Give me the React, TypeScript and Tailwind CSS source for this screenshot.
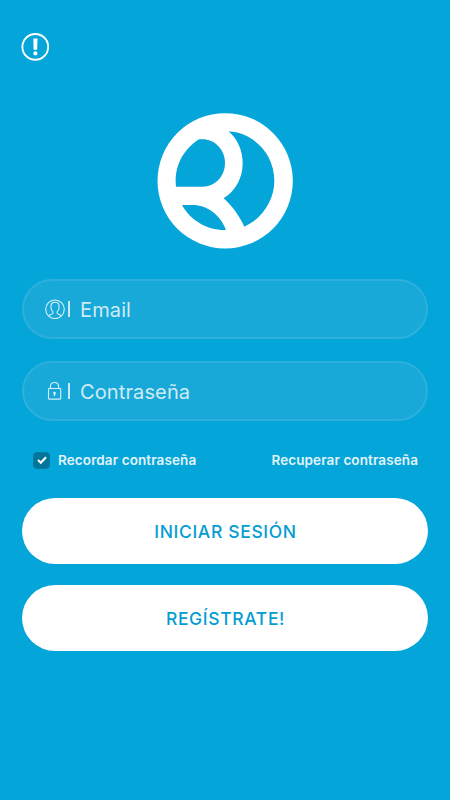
import { useState } from "react";

interface FieldProps {
  label: string;
  icon: React.ReactNode;
}

const Logo: React.FC = () => (
  <svg className="h-[136px] w-[136px]" viewBox="36 39 408 408">
    <circle cx="240.5" cy="242.5" r="203" fill="#fff" />
    <g fill="#04a5d9">
      <path d="M162 118H172C210 118 240 150 240 189C240 228 211 260 173 260H93C86 203 112 150 162 118Z" />
      <path d="M251 94C329 99 388 164 388 242C388 301 351 356 298 380C283 348 262 318 236 295C272 273 293 234 293 190C293 151 278 118 251 94Z" />
      <path d="M111 315H142C188 315 225 345 243 390C187 392 136 361 111 315Z" />
    </g>
  </svg>
);

const AlertIcon: React.FC = () => (
  <svg className="h-7 w-7" viewBox="0 0 28 28">
    <circle cx="14.3" cy="13.9" r="12.9" fill="none" stroke="#fff" strokeWidth="1.9" />
    <path d="M12.3 5.6h4.2l-.3 11.2h-3.6z" fill="#fff" />
    <circle cx="14.4" cy="20.4" r="2.1" fill="#fff" />
  </svg>
);

const UserIcon: React.FC = () => (
  <svg className="h-5 w-5" viewBox="0 0 20 20" fill="none" stroke="#d9f0f9" strokeWidth="1.1">
    <circle cx="10" cy="10.3" r="9.3" />
    <path d="M3.6 17C4.3 15.5 8 15.5 8 14V12.9C6.8 12 6 10.5 6 8.5V6.9C6 4.6 7.6 3.3 10 3.3S14 4.6 14 6.9V8.5C14 10.5 13.2 12 12 12.9V14C12 15.5 15.7 15.5 16.4 17" />
  </svg>
);

const LockIcon: React.FC = () => (
  <svg className="h-5 w-5" viewBox="0 0 20 20" fill="none" stroke="#d9f0f9" strokeWidth="1.1">
    <rect x="3.5" y="7.5" width="12.2" height="10.6" rx="0.6" />
    <path d="M5.4 7.5V5.4C5.4 2.9 7.1 1.5 9.5 1.5S13.6 2.9 13.6 5.4V7.5" />
    <path d="M9.5 12v3" strokeWidth="1.4" />
    <circle cx="9.5" cy="12" r="1.3" fill="#d9f0f9" stroke="none" />
  </svg>
);

const Field: React.FC<FieldProps> = ({ label, icon }) => {
  return (
    <div className="flex h-[60px] w-full items-center rounded-full border-2 border-[#2db0dc] bg-[#18a9d9] pl-[21px]">
      {icon}
      <span className="ml-[3px] h-4 w-[2px] bg-[#c9e9f5]" />
      <span className="ml-[10px] pt-0.5 text-[20px] leading-6 tracking-[0.12px] text-[#d0ebf5]">{label}</span>
    </div>
  );
};

const App: React.FC = () => {
  const [remember, setRemember] = useState<boolean>(true);

  return (
    <div className="flex min-h-screen w-full flex-col bg-[#04a5d9] px-[22px] pt-[33px] font-['Inter',sans-serif]">
      <header className="-ml-px h-7">
        <AlertIcon />
      </header>

      <div className="mt-[52px] flex justify-center">
        <Logo />
      </div>

      <div className="mt-[30px] flex flex-col gap-[22px]">
        <Field label="Email" icon={<UserIcon />} />
        <Field label="Contraseña" icon={<LockIcon />} />
      </div>

      <div className="mt-[29px] flex h-5 items-center justify-between pr-[10px] pl-[11px] text-[13.5px] font-semibold tracking-[0.11px] text-[#e2f4fa]">
        <button className="flex items-center gap-2" onClick={() => setRemember(!remember)}>
          <span className="flex h-[17px] w-[17px] items-center justify-center rounded-[4px] border border-[#057ba3] bg-[#03749a]">
            {remember && (
              <svg className="h-[10px] w-[10px]" viewBox="0 0 10 10" fill="none" stroke="#fff" strokeWidth="2.1">
                <path d="M1 5l2.8 2.7L9 2.2" />
              </svg>
            )}
          </span>
          <span className="pt-px">Recordar contraseña</span>
        </button>
        <span className="pt-px">Recuperar contraseña</span>
      </div>

      <div className="mt-7 flex flex-col gap-[21px] text-[17.5px] font-medium tracking-[0.65px] text-[#049dd2]">
        <button className="h-[66px] w-full rounded-full bg-white pt-0.5 pl-px">INICIAR SESIÓN</button>
        <button className="h-[66px] w-full rounded-full bg-white pt-0.5 pl-px">REGÍSTRATE!</button>
      </div>
    </div>
  );
};

export default App;
